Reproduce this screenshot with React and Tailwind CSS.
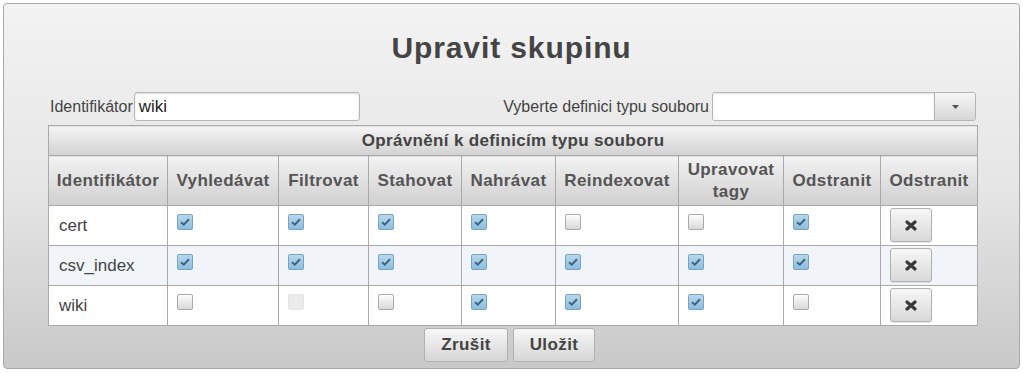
import React from 'react';

const cols = ['Identifikátor', 'Vyhledávat', 'Filtrovat', 'Stahovat', 'Nahrávat', 'Reindexovat', 'Upravovat tagy', 'Odstranit', 'Odstranit'];
const widths = ['w-[119px]', 'w-[111px]', 'w-[90px]', 'w-[93px]', 'w-[94px]', 'w-[123px]', 'w-[105px]', 'w-[97px]', 'w-[97px]'];

// 1 = zaskrtnuto, 0 = prazdne, 2 = zakazane
const rows = [
    { name: 'cert', perms: [1, 1, 1, 1, 0, 0, 1] },
    { name: 'csv_index', perms: [1, 1, 1, 1, 1, 1, 1] },
    { name: 'wiki', perms: [0, 2, 0, 1, 1, 1, 0] },
];

const Check = ({ state }) => {
    if (state === 2) {
        return <span className="block w-[16px] h-[16px] rounded-[2px] bg-[#ebebeb] border border-[#e4e4e4]" />;
    }
    if (state === 0) {
        return <span className="block w-[16px] h-[16px] rounded-[2px] border border-[#a9a9a9] bg-gradient-to-b from-[#fdfdfd] to-[#d9d9d9] shadow-[inset_0_1px_0_#fff]" />;
    }
    return (
        <span className="flex items-center justify-center w-[16px] h-[16px] rounded-[2px] border border-[#7aa3c0] bg-gradient-to-b from-[#b7d7ec] to-[#8dbedd]">
            <svg width="10" height="8" viewBox="0 0 10 8">
                <path d="M1 4.2 L3.8 6.6 L9 1.2" fill="none" stroke="#3e6583" strokeWidth="2" />
            </svg>
        </span>
    );
};

const App = () => {
    return (
        <div className="w-[1023px] h-[373px] bg-white pt-[3px] pl-[3px]" style={{ fontFamily: '"Liberation Sans", Arial, sans-serif' }}>
            <div className="w-[1017px] h-[366px] border border-[#a8a8a8] rounded-[4px] bg-gradient-to-b from-[#f3f3f3] via-[#e6e6e6] to-[#c9c9c9] text-[#444]">
                <h1 className="pt-[27px] h-[88px] text-center text-[30px] tracking-[0.9px] leading-[34px] font-bold text-[#444]">Upravit skupinu</h1>

                <div className="w-[929px] ml-[44px]">
                    <div className="flex items-center justify-between h-[29px]">
                        <div className="flex items-center pl-[2px]">
                            <span className="text-[16px] text-[#444]">Identifikátor</span>
                            <div className="ml-[1px] w-[226px] h-[29px] bg-white border border-[#b5b5b5] rounded-[3px] shadow-[inset_0_1px_2px_rgba(0,0,0,0.15)] px-[4px] text-[17px] leading-[27px] text-[#222]">wiki</div>
                        </div>
                        <div className="flex items-center pr-[1px]">
                            <span className="text-[16px] text-[#444] mr-[3px]">Vyberte definici typu souboru</span>
                            <div className="flex w-[264px] h-[29px] border border-[#b5b5b5] rounded-[3px] overflow-hidden">
                                <div className="flex-1 bg-white shadow-[inset_0_1px_2px_rgba(0,0,0,0.12)]" />
                                <div className="w-[41px] border-l border-[#b5b5b5] bg-gradient-to-b from-[#f6f6f6] to-[#d6d6d6] flex items-center justify-center">
                                    <svg width="7" height="4" viewBox="0 0 7 4"><path d="M0 0 L7 0 L3.5 4 Z" fill="#555" /></svg>
                                </div>
                            </div>
                        </div>
                    </div>

                    <table className="mt-[4px] w-[929px] table-fixed border-collapse text-[17px]">
                        <colgroup>
                            {widths.map((w, i) => <col key={i} className={w} />)}
                        </colgroup>
                        <thead>
                            <tr>
                                <th colSpan={9} className="h-[30px] border border-[#a9a9a9] bg-gradient-to-b from-[#f4f4f4] to-[#d2d2d2] font-bold text-[17px] tracking-[0.35px] text-[#444] text-center">
                                    Oprávnění k definicím typu souboru
                                </th>
                            </tr>
                            <tr>
                                {cols.map((c, i) => (
                                    <th key={i} className="h-[50px] border border-[#a9a9a9] bg-gradient-to-b from-[#f2f2f2] to-[#d0d0d0] font-bold text-[17px] tracking-[0.4px] leading-[22px] text-[#555] text-center px-[4px]">
                                        {c}
                                    </th>
                                ))}
                            </tr>
                        </thead>
                        <tbody>
                            {rows.map((r, ri) => (
                                <tr key={ri} className={ri === 1 ? 'bg-[#f1f5fa]' : 'bg-white'}>
                                    <td className="h-[40px] border border-[#a9a9a9] pl-[10px] text-[17px] text-[#444]">{r.name}</td>
                                    {r.perms.map((p, pi) => (
                                        <td key={pi} className="h-[40px] border border-[#a9a9a9] align-top pt-[8px] pl-[9px]">
                                            <Check state={p} />
                                        </td>
                                    ))}
                                    <td className="h-[40px] border border-[#a9a9a9] align-top pt-[2px] pl-[9px]">
                                        <button className="flex items-center justify-center w-[42px] h-[34px] rounded-[3px] border border-[#b0b0b0] bg-gradient-to-b from-[#f7f7f7] to-[#d9d9d9] shadow-[0_1px_1px_rgba(0,0,0,0.1)]">
                                            <svg width="12" height="11" viewBox="0 0 12 11">
                                                <path d="M2 2 L10 9 M10 2 L2 9" stroke="#3a3a3a" strokeWidth="3.2" strokeLinecap="round" />
                                            </svg>
                                        </button>
                                    </td>
                                </tr>
                            ))}
                        </tbody>
                    </table>

                    <div className="flex justify-center gap-[5px] mt-[2px] pr-[6px]">
                        <button className="w-[84px] h-[34px] rounded-[3px] border border-[#b0b0b0] bg-gradient-to-b from-[#f7f7f7] to-[#d6d6d6] font-bold text-[17px] tracking-[0.4px] text-[#444]">Zrušit</button>
                        <button className="w-[82px] h-[34px] rounded-[3px] border border-[#b0b0b0] bg-gradient-to-b from-[#f7f7f7] to-[#d6d6d6] font-bold text-[17px] tracking-[0.4px] text-[#444]">Uložit</button>
                    </div>
                </div>
            </div>
        </div>
    );
};

export default App;
